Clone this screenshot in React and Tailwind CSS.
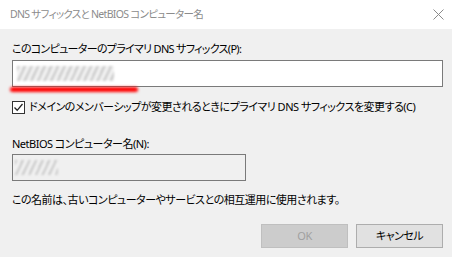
import React from "react";

const font = "font-['Noto_Sans','Noto_Sans_CJK_JP',sans-serif] [font-feature-settings:'palt']";

const Blurred = ({ className }) => (
  <div
    className={`h-[15px] bg-[repeating-linear-gradient(115deg,#cdcdcd_0px,#cdcdcd_2px,#f2f2f2_3px,#f2f2f2_6px)] blur-[1.2px] ${className}`}
  />
);

export default function App() {
  return (
    <div className={`w-[452px] h-[257px] bg-[#f0f0f0] flex flex-col text-[11px] tracking-[-0.5px] text-black ${font}`}>
      <div className="h-[29px] bg-white flex items-center justify-between pl-[10px] pr-[7px]">
        <span className="text-[#8c8c8c] text-[10.5px] tracking-[-0.7px]">DNS サフィックスと NetBIOS コンピューター名</span>
        <svg width="11" height="11" viewBox="0 0 11 11" className="mr-[1px]">
          <path d="M0.5 0.5L10.5 10.5M10.5 0.5L0.5 10.5" stroke="#8a8a8a" strokeWidth="1" />
        </svg>
      </div>

      <div className="flex flex-col px-[12px] pr-[9px]">
        <div className="h-[16px] leading-[16px] mt-[12px] tracking-[-0.7px]">このコンピューターのプライマリ DNS サフィックス(P):</div>
        <div className="relative mt-[3px]">
          <div className="h-[27px] border border-[#7a7a7a] bg-white flex items-center pl-[4px]">
            <Blurred className="w-[97px]" />
          </div>
          <div className="absolute left-[-2px] top-[27px] w-[128px] h-[5px] rounded-full bg-[#ff0000] blur-[1.5px]" />
        </div>
        <div className="flex items-center gap-[4px] mt-[13px] h-[14px] whitespace-nowrap">
          <div className="w-[13px] h-[13px] shrink-0 border border-[#333333] bg-white flex items-center justify-center">
            <svg width="11" height="11" viewBox="0 0 11 11">
              <path d="M1.5 5.5L4.2 8.3L9.5 2" stroke="#222222" strokeWidth="1.3" fill="none" />
            </svg>
          </div>
          <span className="leading-[16px]">ドメインのメンバーシップが変更されるときにプライマリ DNS サフィックスを変更する(C)</span>
        </div>

        <div className="h-[16px] leading-[16px] mt-[22px]">NetBIOS コンピューター名(N):</div>
        <div className="w-[234px] h-[27px] border border-[#7a7a7a] bg-[#f0f0f0] flex items-center pl-[2px] mt-[2px]">
          <Blurred className="w-[43px]" />
        </div>
        <div className="h-[16px] leading-[16px] mt-[11px]">この名前は、古いコンピューターやサービスとの相互運用に使用されます。</div>

        <div className="flex justify-end gap-[8px] mt-[16px]">
          <div className="w-[87px] h-[24px] bg-[#cccccc] border border-[#bfbfbf] text-[#a0a0a0] flex items-center justify-center">OK</div>
          <div className="w-[87px] h-[24px] bg-[#e1e1e1] border border-[#adadad] flex items-center justify-center">キャンセル</div>
        </div>
      </div>
    </div>
  );
}
